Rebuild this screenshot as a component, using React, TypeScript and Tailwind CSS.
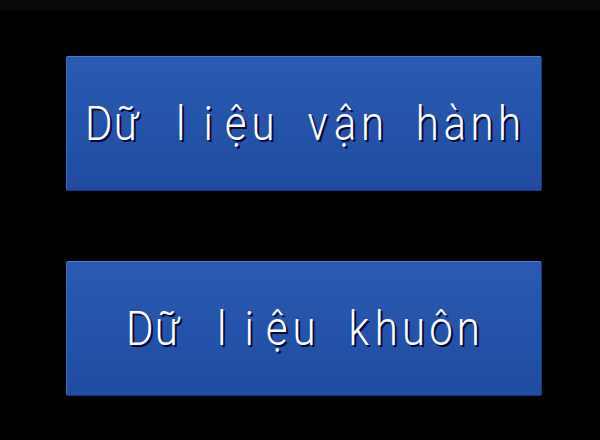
const Label = ({ text }: { text: string }) => (
  <div className="flex scale-y-[1.15] font-['Roboto','Liberation_Sans',sans-serif] text-[42px] font-light leading-none text-white [text-shadow:2px_2px_0_#06083a]">
    {Array.from(text).map((ch, i) => (
      <span key={i} className="inline-block w-[27.4px] text-center">
        {ch === " " ? "\u00a0" : ch}
      </span>
    ))}
  </div>
);

const MenuButton = ({ label, h }: { label: string; h: string }) => (
  <button
    className={`flex w-[476px] ${h} items-center justify-center rounded-[2px] border-t border-l border-t-[#4a7ad0] border-l-[#3d6cc4] border-r border-b border-r-[#163a86] border-b-[#143680] bg-gradient-to-b from-[#2a5ab2] to-[#1f4ca0]`}
  >
    <Label text={label} />
  </button>
);

export default function App() {
  return (
    <div className="h-[440px] w-[600px] overflow-hidden bg-black">
      <div className="h-[10px] bg-[#08080b]" />
      <div className="flex flex-col gap-[70px] pl-[66px] pt-[46px]">
        <MenuButton label="Dữ liệu vận hành" h="h-[135px]" />
        <MenuButton label="Dữ liệu khuôn" h="h-[135px]" />
      </div>
    </div>
  );
}
